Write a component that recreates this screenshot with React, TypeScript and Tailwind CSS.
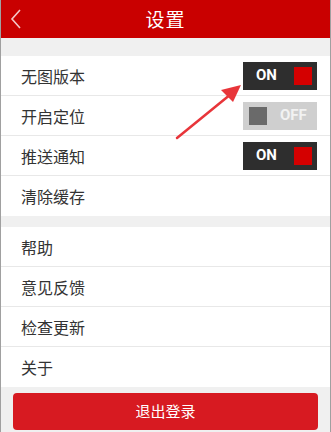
import React from 'react'

function Toggle({ on }: { on: boolean }) {
  if (on) {
    return (
      <div className="flex items-center justify-between w-[74px] h-[28px] bg-[#2e2e2e] pl-[13px] pr-[5px]">
        <span className="text-white font-bold text-[15px] leading-none" style={{ fontFamily: 'Roboto, sans-serif' }}>ON</span>
        <span className="w-[18px] h-[18px] bg-[#d40000]" />
      </div>
    )
  }
  return (
    <div className="flex items-center w-[74px] h-[28px] bg-[#cfcfcf] pl-[6px] pr-[8px] gap-[13px]">
      <span className="w-[18px] h-[18px] bg-[#6a6a6a]" />
      <span className="text-[#f2f2f2] font-bold text-[15px] leading-none" style={{ fontFamily: 'Roboto, sans-serif' }}>OFF</span>
    </div>
  )
}

function Row({ label, toggle, last }: { label: string; toggle?: boolean; last?: boolean }) {
  return (
    <div className={`flex items-center justify-between h-[40px] pl-[20px] pr-[13px] bg-white ${last ? '' : 'border-b border-[#e8e8e8]'}`}>
      <span className="text-[16px] text-[#333]">{label}</span>
      {toggle !== undefined && <Toggle on={toggle} />}
    </div>
  )
}

export default function App() {
  return (
    <div
      className="relative w-[331px] h-[432px] bg-[#f0f0f0] border-x border-[#a0a0a0] overflow-hidden"
      style={{ fontFamily: '"Noto Sans CJK SC", "Noto Sans", sans-serif' }}
    >
      <header className="relative flex items-center justify-center h-[38px] bg-[#c90000]">
        <svg className="absolute left-[9px] top-[9px]" width="12" height="20" viewBox="0 0 12 20">
          <path d="M10 1 L2 10 L10 19" fill="none" stroke="#f4c7c7" strokeWidth="1.6" />
        </svg>
        <h1 className="text-white text-[19px] tracking-[1px]">设置</h1>
      </header>

      <div className="h-[18px]" />

      <div className="flex flex-col">
        <Row label="无图版本" toggle={true} />
        <Row label="开启定位" toggle={false} />
        <Row label="推送通知" toggle={true} />
        <Row label="清除缓存" last />
      </div>

      <div className="h-[11px]" />

      <div className="flex flex-col">
        <Row label="帮助" />
        <Row label="意见反馈" />
        <Row label="检查更新" />
        <Row label="关于" last />
      </div>

      <div className="px-[12px] pt-[6px]">
        <button className="w-full h-[37px] rounded-[4px] bg-[#d71a21] text-white text-[15px]">退出登录</button>
      </div>

      <svg className="absolute left-[172px] top-[80px]" width="72" height="62" viewBox="0 0 72 62">
        <path d="M4 58 L58 14" stroke="#e8353a" strokeWidth="2.5" strokeLinecap="round" />
        <path d="M68 5 L48 10 L60 22 Z" fill="#e8353a" />
      </svg>
    </div>
  )
}
